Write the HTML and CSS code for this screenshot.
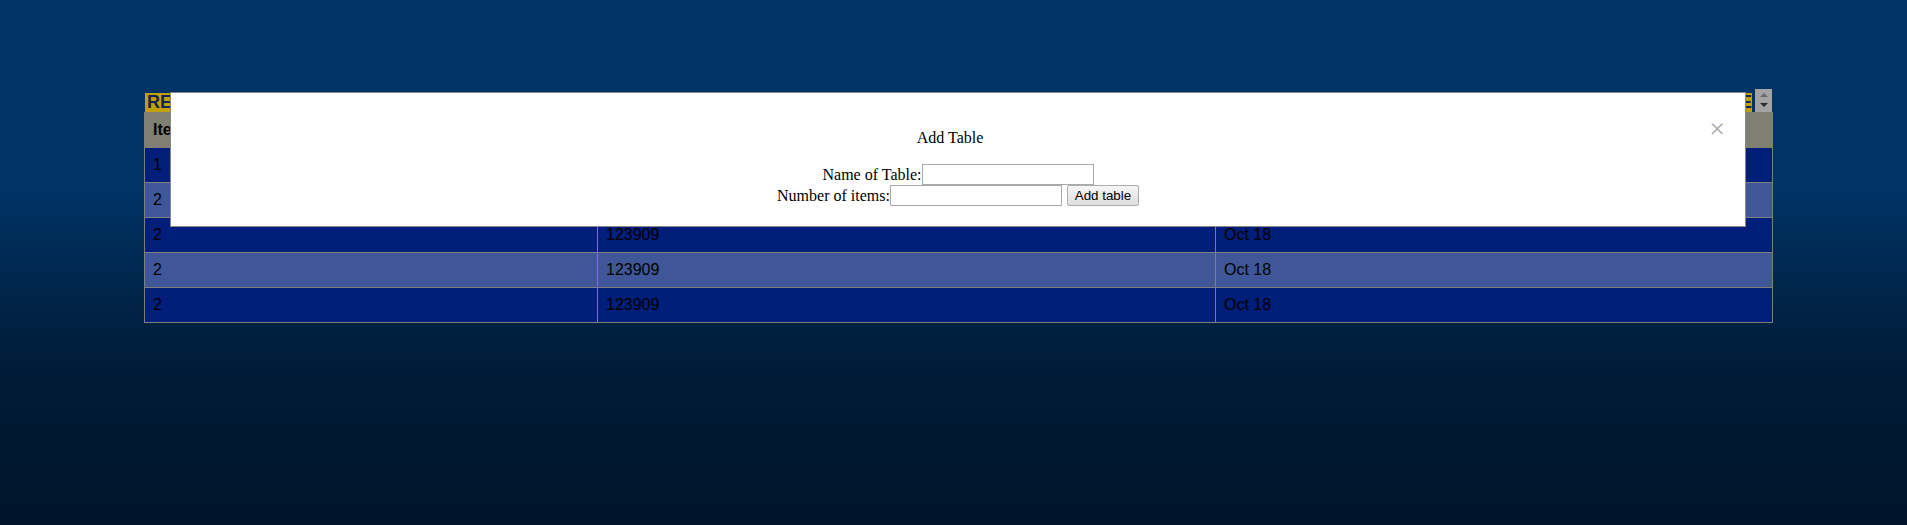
FILE: index.html
```html
<!DOCTYPE html>
<html>
<head>
<meta charset="utf-8">
<link rel="stylesheet" href="styles.css">
</head>
<body>
<div class="board">
  <div class="caption-wrap">
    <div class="caption"><span>RESERVATIONS</span><span>TABLE</span></div>
    <div class="scroll"><span class="arrow-up"></span><span class="arrow-down"></span></div>
  </div>
  <table class="grid">
    <colgroup><col class="c1"><col class="c2"><col class="c3"></colgroup>
    <thead>
      <tr class="head"><th>Item</th><th>Number</th><th>Date</th></tr>
    </thead>
    <tbody>
      <tr class="dark"><td>1</td><td>123909</td><td>Oct 18</td></tr>
      <tr class="light"><td>2</td><td>123909</td><td>Oct 18</td></tr>
      <tr class="dark"><td>2</td><td>123909</td><td>Oct 18</td></tr>
      <tr class="light"><td>2</td><td>123909</td><td>Oct 18</td></tr>
      <tr class="dark"><td>2</td><td>123909</td><td>Oct 18</td></tr>
    </tbody>
  </table>
</div>

<div class="modal">
  <span class="close">&times;</span>
  <p class="title">Add Table</p>
  <form class="form"><div class="line">Name of Table:<input type="text" class="field"></div><div class="line">Number of items:<input type="text" class="field"> <button type="button" class="btn">Add table</button></div></form>
</div>
</body>
</html>
```
FILE: styles.css
```css
html, body {
  margin: 0;
  padding: 0;
}
body {
  min-height: 525px;
  background: linear-gradient(to bottom, #003366 0px, #003366 190px, #002448 300px, #001a36 380px, #00152b 525px);
  font-family: "Liberation Sans", Arial, sans-serif;
}
.board {
  width: 1628px;
  margin: 89px 0 0 144px;
}
.caption-wrap {
  display: flex;
  height: 23px;
}
.caption {
  flex: 1;
  margin: 4px 3px 0 1px;
  height: 19px;
  padding-left: 2px;
  background: #c2a000;
  color: #13264f;
  font-weight: bold;
  font-size: 18px;
  line-height: 19px;
  display: flex;
  justify-content: space-between;
  overflow: hidden;
}
.scroll {
  width: 17px;
  height: 23px;
  background: #a3a3a3;
  display: flex;
  flex-direction: column;
  align-items: center;
  justify-content: space-between;
  padding: 4px 0 5px;
  box-sizing: border-box;
}
.arrow-up {
  width: 0;
  height: 0;
  border-left: 4px solid transparent;
  border-right: 4px solid transparent;
  border-bottom: 4px solid #6a6a6a;
}
.arrow-down {
  width: 0;
  height: 0;
  border-left: 4px solid transparent;
  border-right: 4px solid transparent;
  border-top: 4px solid #2a2a2a;
}
.grid {
  width: 1628px;
  border-collapse: collapse;
  table-layout: fixed;
  border: 1px solid #808080;
  font-size: 16px;
  color: #000;
}
.c1 { width: 453px; }
.c2 { width: 618px; }
.c3 { width: 557px; }
.grid th, .grid td {
  border: 1px solid #7f7f7f;
  padding: 8px 8px;
  line-height: 18px;
  text-align: left;
}
.head {
  background: #808072;
}
.grid th {
  font-weight: bold;
  border-color: #808072;
}
.dark {
  background: #001e7a;
}
.light {
  background: #3f5798;
}
.modal {
  position: absolute;
  top: 92px;
  left: 170px;
  width: 1576px;
  box-sizing: border-box;
  background: #fff;
  border: 1px solid #888;
  padding: 20px;
  text-align: center;
  font-family: "Liberation Serif", "Times New Roman", serif;
  font-size: 16px;
  color: #000;
}
.close {
  float: right;
  color: #aaa;
  font-size: 28px;
  line-height: 32px;
}
.title {
  margin: 16px 0 17px;
  line-height: 18px;
}
.form {
  margin: 0;
}
.line {
  height: 21px;
  line-height: 21px;
}
.field {
  width: 172px;
  height: 21px;
  box-sizing: border-box;
  border: 1px solid #a9a9a9;
  padding: 1px 2px;
  margin: 0;
  vertical-align: bottom;
  font-family: "Liberation Sans", Arial, sans-serif;
  font-size: 13.33px;
}
.btn {
  width: 72px;
  height: 21px;
  box-sizing: border-box;
  margin: 0 0 0 1px;
  padding: 1px 6px;
  border: 1px solid #adadad;
  border-radius: 2px;
  background: linear-gradient(#f6f6f6, #dedede);
  vertical-align: bottom;
  font-family: "Liberation Sans", Arial, sans-serif;
  font-size: 13.33px;
  color: #000;
}
```
